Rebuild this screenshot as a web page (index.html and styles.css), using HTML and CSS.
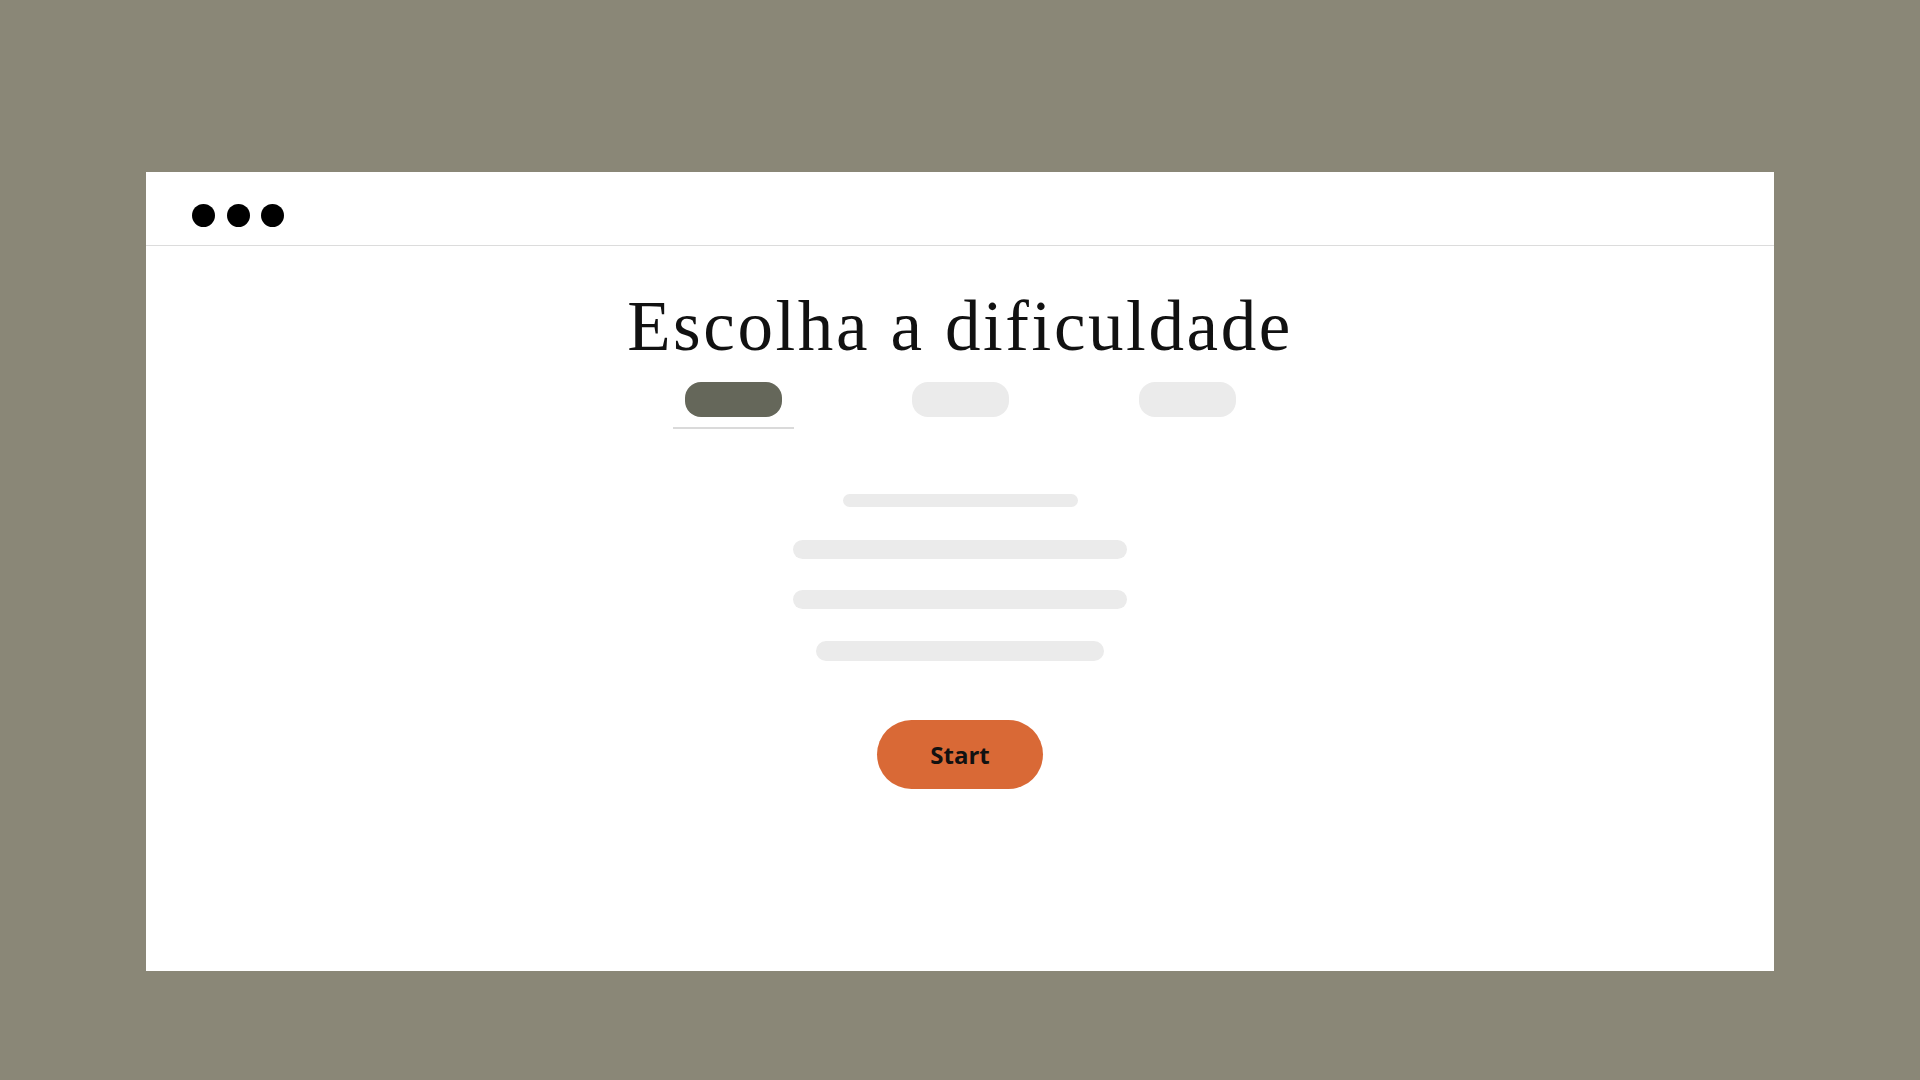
FILE: index.html
```html
<!DOCTYPE html>
<html lang="pt">
<head>
<meta charset="utf-8">
<title>Escolha a dificuldade</title>
<link rel="stylesheet" href="styles.css">
</head>
<body>
  <div class="window">
    <div class="titlebar">
      <span class="dot"></span>
      <span class="dot"></span>
      <span class="dot"></span>
    </div>
    <main class="content">
      <h1 class="title">Escolha a dificuldade</h1>
      <div class="tabs">
        <div class="tab active"><span class="pill"></span></div>
        <div class="tab"><span class="pill"></span></div>
        <div class="tab"><span class="pill"></span></div>
      </div>
      <div class="lines">
        <div class="line l1"></div>
        <div class="line l2"></div>
        <div class="line l3"></div>
        <div class="line l4"></div>
      </div>
      <button class="start">Start</button>
    </main>
  </div>
</body>
</html>
```

FILE: styles.css
```css
* { box-sizing: border-box; }
html, body { margin: 0; }
body {
  background: #8a8777;
  height: 1080px;
  padding: 172px 146px 0;
  font-family: "Open Sans", "Liberation Sans", sans-serif;
}
.window {
  background: #ffffff;
  height: 799px;
  display: flex;
  flex-direction: column;
}
.titlebar {
  height: 74px;
  border-bottom: 1.5px solid #dcdcdc;
  padding: 32px 0 0 46px;
  display: flex;
  gap: 11.5px;
  align-items: flex-start;
}
.dot {
  width: 23px;
  height: 23px;
  border-radius: 50%;
  background: #000;
}
.content {
  display: flex;
  flex-direction: column;
  align-items: center;
}
.title {
  margin: 41px 0 0;
  font-family: "Liberation Serif", "DejaVu Serif", serif;
  font-weight: 400;
  font-size: 71px;
  line-height: 78px;
  color: #111;
  letter-spacing: 2.6px;
}
.tabs {
  margin-top: 17px;
  display: flex;
  gap: 106px;
}
.tab {
  width: 121px;
  display: flex;
  justify-content: center;
  padding-bottom: 10px;
  border-bottom: 2px solid transparent;
}
.tab.active { border-bottom-color: #dadada; }
.pill {
  width: 97px;
  height: 35px;
  border-radius: 16px;
  background: #ebebeb;
}
.tab.active .pill { background: #65675a; }
.lines {
  margin-top: 65px;
  display: flex;
  flex-direction: column;
  align-items: center;
}
.line {
  background: #ebebeb;
  border-radius: 10px;
}
.l1 { width: 235px; height: 13px; }
.l2 { width: 334px; height: 19px; margin-top: 33px; }
.l3 { width: 334px; height: 19px; margin-top: 31px; }
.l4 { width: 288px; height: 20px; margin-top: 32px; }
.start {
  margin-top: 59px;
  width: 166px;
  height: 69px;
  border: none;
  border-radius: 35px;
  background: #d96936;
  color: #111;
  font-family: "Open Sans", "Liberation Sans", sans-serif;
  font-weight: 700;
  font-size: 24px;
  padding: 0;
}
```
